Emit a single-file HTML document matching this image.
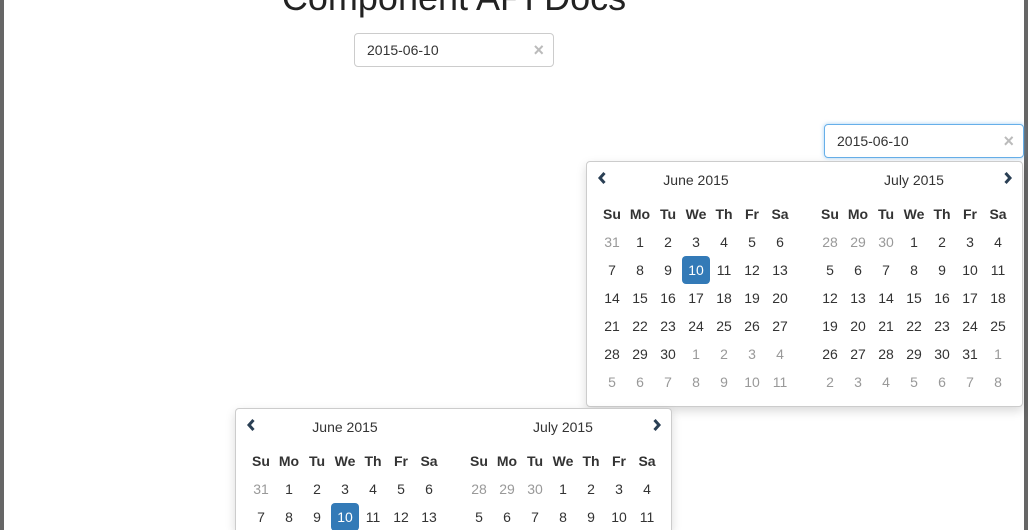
<!DOCTYPE html>
<html style="width:1028px;height:530px;overflow:hidden"><head><meta charset="utf-8"><style>
body{margin:0;width:1028px;height:530px;overflow:hidden;background:#fff;font-family:"Liberation Sans",sans-serif;color:#333;position:relative}
.bl{position:absolute;left:0;top:0;width:4px;height:530px;background:#666}
.br{position:absolute;left:1024px;top:0;width:4px;height:530px;background:#666}
h1{position:absolute;left:0;width:908px;top:-22px;margin:0;text-align:center;font-weight:400;font-size:36px;color:#222;line-height:40px}
.inp{position:absolute;width:198px;height:32px;border:1px solid #ccc;border-radius:4px;box-sizing:border-box;font-size:14px;line-height:30px;padding-left:12px;color:#333}
.inp .x{position:absolute;right:9px;top:0;color:#bbb;font-size:18px;font-weight:bold}
.cal{position:absolute;width:437px;height:246px;border:1px solid #ccc;border-radius:4px;box-sizing:border-box;background:#fff;box-shadow:0 4px 10px rgba(0,0,0,.15);overflow:hidden}
.m{position:absolute;top:38px;border-collapse:collapse;font-size:14px}
.m td{width:28px;height:28px;padding:0;text-align:center}
.m th{width:28px;height:28px;padding:0;text-align:center;font-weight:bold;color:#333}
.o{color:#999}
.s{background:#337ab7;color:#fff;border-radius:4px}
.t{position:absolute;top:10px;width:196px;text-align:center;font-size:14px;color:#333}
.nav{position:absolute}
</style></head><body>
<div class="bl"></div><div class="br"></div>
<h1>Component API Docs</h1>
<div class="inp" style="left:354px;top:33px;height:34px;width:200px;line-height:32px">2015-06-10<span class="x">×</span></div>
<div class="inp" style="left:824px;top:124px;height:34px;width:200px;line-height:32px;border-color:#66afe9;box-shadow:0 0 4px rgba(102,175,233,.6)">2015-06-10<span class="x">×</span></div>

<div class="cal" style="left:586px;top:161px">
<svg class="nav" style="left:10px;top:9px" width="10" height="14"><path d="M7.5 2 L3 7 L7.5 12" stroke="#2a3f54" stroke-width="3" fill="none"/></svg>
<svg class="nav" style="left:416px;top:9px" width="10" height="14"><path d="M2.5 2 L7 7 L2.5 12" stroke="#2a3f54" stroke-width="3" fill="none"/></svg>
<div class="t" style="left:11px">June 2015</div><div class="t" style="left:229px">July 2015</div>
<table class="m" style="left:11px"><tr><th>Su</th><th>Mo</th><th>Tu</th><th>We</th><th>Th</th><th>Fr</th><th>Sa</th></tr>
<tr><td class="o">31</td><td>1</td><td>2</td><td>3</td><td>4</td><td>5</td><td>6</td></tr>
<tr><td>7</td><td>8</td><td>9</td><td class="s">10</td><td>11</td><td>12</td><td>13</td></tr>
<tr><td>14</td><td>15</td><td>16</td><td>17</td><td>18</td><td>19</td><td>20</td></tr>
<tr><td>21</td><td>22</td><td>23</td><td>24</td><td>25</td><td>26</td><td>27</td></tr>
<tr><td>28</td><td>29</td><td>30</td><td class="o">1</td><td class="o">2</td><td class="o">3</td><td class="o">4</td></tr>
<tr><td class="o">5</td><td class="o">6</td><td class="o">7</td><td class="o">8</td><td class="o">9</td><td class="o">10</td><td class="o">11</td></tr></table>
<table class="m" style="left:229px"><tr><th>Su</th><th>Mo</th><th>Tu</th><th>We</th><th>Th</th><th>Fr</th><th>Sa</th></tr>
<tr><td class="o">28</td><td class="o">29</td><td class="o">30</td><td>1</td><td>2</td><td>3</td><td>4</td></tr>
<tr><td>5</td><td>6</td><td>7</td><td>8</td><td>9</td><td>10</td><td>11</td></tr>
<tr><td>12</td><td>13</td><td>14</td><td>15</td><td>16</td><td>17</td><td>18</td></tr>
<tr><td>19</td><td>20</td><td>21</td><td>22</td><td>23</td><td>24</td><td>25</td></tr>
<tr><td>26</td><td>27</td><td>28</td><td>29</td><td>30</td><td>31</td><td class="o">1</td></tr>
<tr><td class="o">2</td><td class="o">3</td><td class="o">4</td><td class="o">5</td><td class="o">6</td><td class="o">7</td><td class="o">8</td></tr></table>
</div>

<div class="cal" style="left:235px;top:408px;height:122px;border-bottom:none;border-radius:4px 4px 0 0">
<svg class="nav" style="left:10px;top:9px" width="10" height="14"><path d="M7.5 2 L3 7 L7.5 12" stroke="#2a3f54" stroke-width="3" fill="none"/></svg>
<svg class="nav" style="left:416px;top:9px" width="10" height="14"><path d="M2.5 2 L7 7 L2.5 12" stroke="#2a3f54" stroke-width="3" fill="none"/></svg>
<div class="t" style="left:11px">June 2015</div><div class="t" style="left:229px">July 2015</div>
<table class="m" style="left:11px"><tr><th>Su</th><th>Mo</th><th>Tu</th><th>We</th><th>Th</th><th>Fr</th><th>Sa</th></tr>
<tr><td class="o">31</td><td>1</td><td>2</td><td>3</td><td>4</td><td>5</td><td>6</td></tr>
<tr><td>7</td><td>8</td><td>9</td><td class="s">10</td><td>11</td><td>12</td><td>13</td></tr></table>
<table class="m" style="left:229px"><tr><th>Su</th><th>Mo</th><th>Tu</th><th>We</th><th>Th</th><th>Fr</th><th>Sa</th></tr>
<tr><td class="o">28</td><td class="o">29</td><td class="o">30</td><td>1</td><td>2</td><td>3</td><td>4</td></tr>
<tr><td>5</td><td>6</td><td>7</td><td>8</td><td>9</td><td>10</td><td>11</td></tr></table>
</div>
</body></html>
